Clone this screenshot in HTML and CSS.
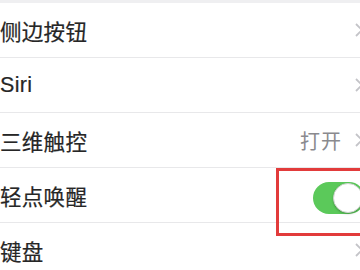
FILE: index.html
```html
<!DOCTYPE html>
<html lang="zh-CN">
<head>
<meta charset="utf-8">
<link rel="stylesheet" href="styles.css">
</head>
<body>
<div class="list">
  <div class="row">
    <span class="label">侧边按钮</span>
    <span class="right"><svg class="chev" viewBox="0 0 8 14" width="8" height="14"><path d="M1 1 L7 7 L1 13" /></svg></span>
  </div>
  <div class="row">
    <span class="label">Siri</span>
    <span class="right"><svg class="chev" viewBox="0 0 8 14" width="8" height="14"><path d="M1 1 L7 7 L1 13" /></svg></span>
  </div>
  <div class="row">
    <span class="label">三维触控</span>
    <span class="right"><span class="value">打开</span><svg class="chev" viewBox="0 0 8 14" width="8" height="14"><path d="M1 1 L7 7 L1 13" /></svg></span>
  </div>
  <div class="row row-toggle">
    <span class="label">轻点唤醒</span>
    <span class="right"><span class="toggle"><span class="knob"></span></span></span>
    <span class="highlight"></span>
  </div>
  <div class="row">
    <span class="label">键盘</span>
    <span class="right"><svg class="chev" viewBox="0 0 8 14" width="8" height="14"><path d="M1 1 L7 7 L1 13" /></svg></span>
  </div>
</div>
</body>
</html>
```
FILE: styles.css
```css
html, body {
  margin: 0;
  padding: 0;
  background: #ffffff;
  overflow: hidden;
  width: 360px;
  height: 270px;
}
.list {
  border-top: 3px solid #efeff1;
  font-family: "Liberation Sans", "Noto Sans CJK SC", sans-serif;
}
.row {
  position: relative;
  height: 54px;
  border-bottom: 1px solid #e8e8ea;
  display: flex;
  align-items: center;
  justify-content: space-between;
}
.label {
  font-size: 21.5px;
  color: #262626;
  letter-spacing: 0.3px;
  -webkit-text-stroke: 0.2px #262626;
}
.right {
  display: flex;
  align-items: center;
  margin-right: -3px;
}
.value {
  font-size: 20px;
  color: #8a8a8e;
  margin-right: 13px;
  letter-spacing: 1px;
}
.chev {
  display: block;
  fill: none;
  stroke: #c4c4c8;
  stroke-width: 1.8;
}
.toggle {
  position: relative;
  width: 52px;
  height: 32px;
  border-radius: 16px;
  background: #5bc95a;
  margin-right: -2px;
  margin-top: 5px;
}
.knob {
  position: absolute;
  right: 2px;
  top: 1px;
  width: 28px;
  height: 28px;
  border-radius: 50%;
  background: #ffffff;
  border: 1px solid #cfd4cf;
  box-shadow: 0 1px 2px rgba(0,0,0,0.25);
}
.highlight {
  position: absolute;
  left: 276px;
  top: 0px;
  width: 90px;
  height: 62px;
  border: 3px solid #e23b3b;
}
```
